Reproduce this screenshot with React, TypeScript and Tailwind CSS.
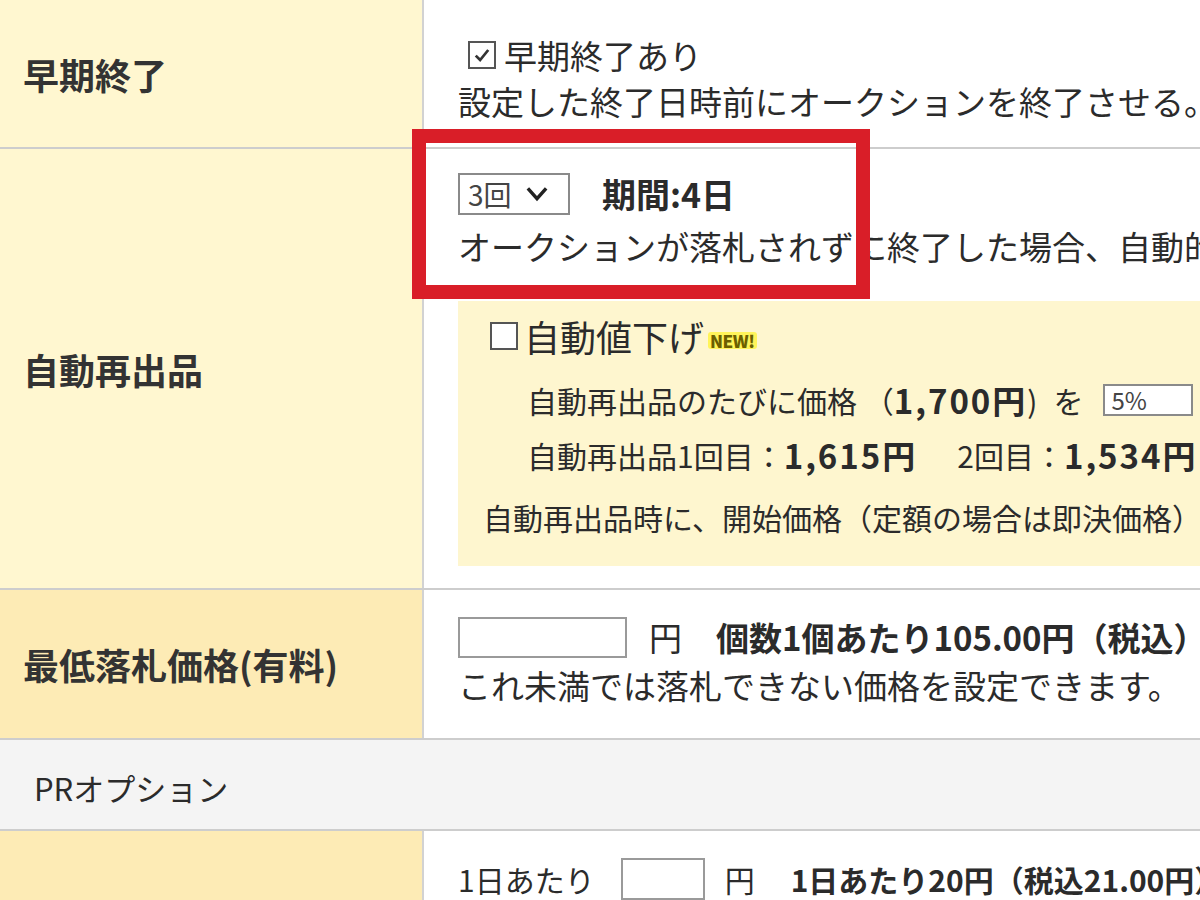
import type { ReactNode } from "react";

// Small square checkbox as drawn by the old listing form
function Check({ checked = false }: { checked?: boolean }) {
  return (
    <span className="inline-flex h-[28px] w-[28px] shrink-0 items-center justify-center border-2 border-[#555] bg-white">
      {checked && (
        <svg viewBox="0 0 16 16" className="h-[20px] w-[20px]" fill="none" stroke="#333" strokeWidth="2.2">
          <path d="M3 8.5 L6.5 12 L13 4" />
        </svg>
      )}
    </span>
  );
}

function Row({
  label,
  labelBg,
  height,
  children,
}: {
  label: string;
  labelBg: string;
  height: string;
  children: ReactNode;
}) {
  return (
    <div className={`flex shrink-0 border-b-2 border-[#cdcdcd] ${height}`}>
      <div
        className={`flex w-[424px] shrink-0 items-center border-r-2 border-[#d2d2d2] pl-[23px] text-[36px] font-bold text-[#333] ${labelBg}`}
      >
        {label}
      </div>
      <div className="min-w-0 flex-1 overflow-hidden bg-white pl-[34px]">{children}</div>
    </div>
  );
}

export default function App() {
  return (
    <div className="relative flex h-[900px] w-[1200px] flex-col overflow-hidden whitespace-nowrap bg-white leading-none text-[#2b2b2b] font-['Noto_Sans_CJK_JP','Noto_Sans',sans-serif]">
      {/* 早期終了 */}
      <Row label="早期終了" labelBg="bg-[#fff7d0]" height="h-[149px]">
        <div className="flex flex-col pt-[35px]">
          <div className="flex h-[40px] items-center gap-[8px] pl-[10px] text-[33px]">
            <Check checked />
            <span>早期終了あり</span>
          </div>
          <div className="mt-[6px] flex h-[40px] items-center text-[33px]">
            設定した終了日時前にオークションを終了させる。
          </div>
        </div>
      </Row>

      {/* 自動再出品 */}
      <Row label="自動再出品" labelBg="bg-[#fff7d0]" height="h-[441px]">
        <div className="flex flex-col pt-[24px]">
          <div className="flex h-[42px] items-center">
            <div className="flex h-[42px] w-[112px] shrink-0 items-center border-2 border-[#8a8a8a] bg-white pl-[8px]">
              <span className="text-[28px] text-[#444]">3回</span>
              <svg viewBox="0 0 20 14" className="ml-[12px] h-[16px] w-[26px]" fill="none" stroke="#222" strokeWidth="3">
                <path d="M2 2 L10 11 L18 2" />
              </svg>
            </div>
            <span className="ml-[32px] text-[34px] font-bold">期間:4日</span>
          </div>
          <div className="mt-[11px] flex h-[40px] items-center text-[33px]">
            オークションが落札されずに終了した場合、自動的に再出品されます。
          </div>

          {/* 自動値下げ box */}
          <div className="mt-[35px] flex h-[265px] flex-col bg-[#fef6cf] pt-[15px]">
            <div className="flex h-[40px] items-center pl-[32px]">
              <Check />
              <span className="ml-[6px] text-[36px]">自動値下げ</span>
              <span className="ml-[4px] mt-[8px] rounded-[3px] bg-[#fff45a] px-[2px] text-[17px] font-black tracking-tight text-[#6b5f00]">
                NEW!
              </span>
            </div>
            <div className="mt-[24px] flex h-[40px] items-center pl-[69px] text-[30px]">
              <span>自動再出品のたびに価格 （</span>
              <span className="text-[33px] font-bold tracking-[2px]">1,700円</span>
              <span>)</span>
              <span className="ml-[16px]">を</span>
              <div className="ml-[20px] flex h-[32px] w-[90px] shrink-0 items-center border-2 border-[#8a8a8a] bg-white pl-[6px] text-[24px] text-[#444]">
                5%
              </div>
            </div>
            <div className="mt-[15px] flex h-[40px] items-center pl-[69px] text-[30px]">
              <span>自動再出品1回目：</span>
              <span className="text-[33px] font-bold tracking-[2px]">1,615円</span>
              <span className="ml-[40px]">2回目：</span>
              <span className="text-[33px] font-bold tracking-[2px]">1,534円</span>
            </div>
            <div className="mt-[22px] flex h-[40px] items-center pl-[25px] text-[30px]">
              自動再出品時に、開始価格（定額の場合は即決価格）を自動で値下げします。
            </div>
          </div>
        </div>
      </Row>

      {/* 最低落札価格 */}
      <Row label="最低落札価格(有料)" labelBg="bg-[#fdebb5]" height="h-[150px]">
        <div className="flex flex-col pt-[27px]">
          <div className="flex h-[41px] items-center text-[33px]">
            <div className="h-[41px] w-[169px] shrink-0 border-2 border-[#9a9a9a] bg-white" />
            <span className="ml-[22px]">円</span>
            <span className="ml-[34px] font-bold">個数1個あたり105.00円（税込）</span>
          </div>
          <div className="mt-[7px] flex h-[40px] items-center text-[33px]">
            これ未満では落札できない価格を設定できます。
          </div>
        </div>
      </Row>

      {/* PRオプション section header */}
      <div className="flex h-[91px] shrink-0 items-center border-b-2 border-[#cdcdcd] bg-[#f4f4f4] pl-[34px] pt-[6px] text-[31px]">
        PRオプション
      </div>

      <Row label="" labelBg="bg-[#fdebb5]" height="h-[120px]">
        <div className="flex pt-[27px]">
          <div className="flex h-[42px] items-center text-[30px]">
            <span>1日あたり</span>
            <div className="ml-[26px] h-[42px] w-[84px] shrink-0 border-2 border-[#9a9a9a] bg-white" />
            <span className="ml-[20px]">円</span>
            <span className="ml-[36px] font-bold">1日あたり20円（税込21.00円）</span>
          </div>
        </div>
      </Row>

      {/* red highlight frame */}
      <div className="pointer-events-none absolute left-[412px] top-[129px] h-[170px] w-[458px] border-[14px] border-[#d91e28]" />
    </div>
  );
}
